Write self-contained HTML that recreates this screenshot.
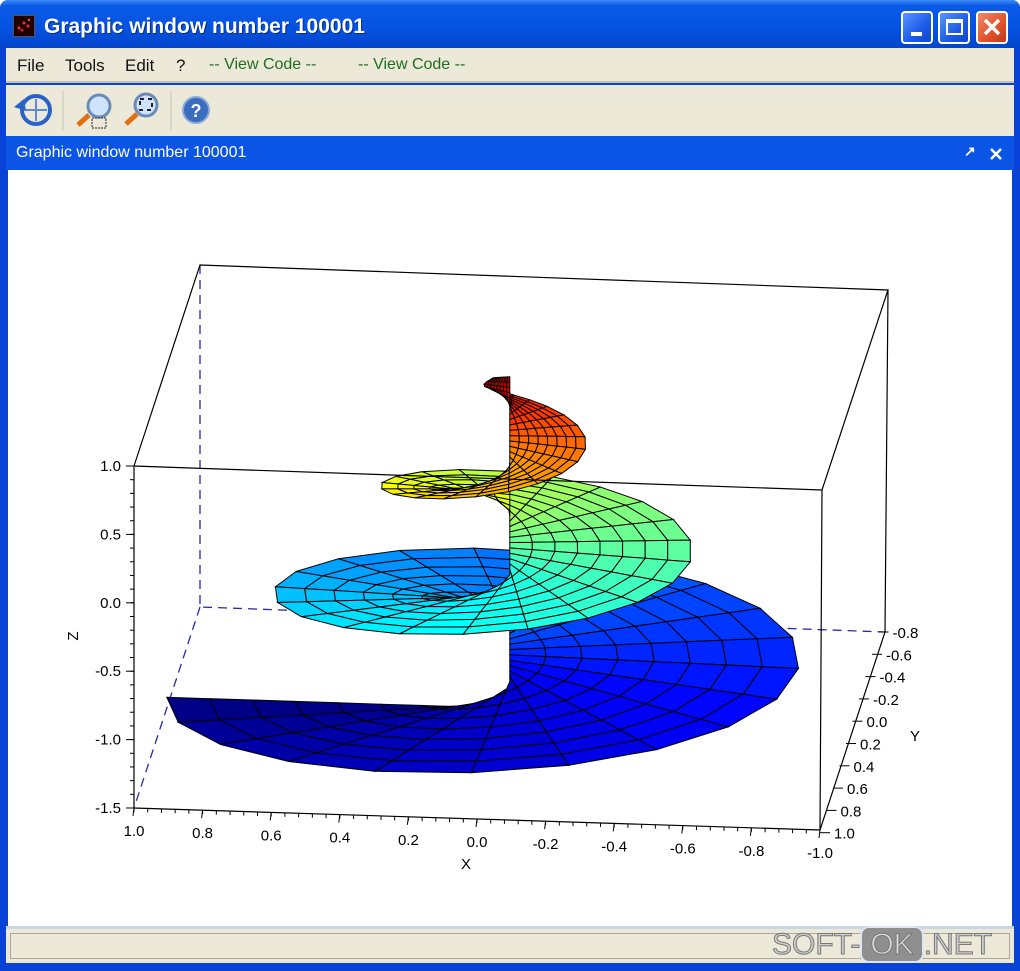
<!DOCTYPE html>
<html><head><meta charset="utf-8"><style>
*{margin:0;padding:0;box-sizing:border-box}
body{width:1020px;height:971px;overflow:hidden;background:#fff;font-family:"Liberation Sans",sans-serif;position:relative}
.abs{position:absolute}
#win{position:absolute;left:0;top:0;width:1020px;height:971px;background:#0842d6;border-radius:8px 8px 0 0}
#title{left:0;top:0;width:1020px;height:48px;border-radius:8px 8px 0 0;background:linear-gradient(#3d8cf7 0,#0a5ae8 12%,#0552e0 60%,#0445cc 100%)}
#title .t{left:44px;top:15px;color:#fff;font-weight:bold;font-size:21px;text-shadow:1px 1px 0 #0a2a8a}
.btn{top:11px;width:32px;height:33px;border:2px solid #fff;border-radius:4px;background:linear-gradient(135deg,#5a93ff,#1c5be8 60%,#1245c8)}
#menu{left:6px;top:48px;width:1008px;height:35px;background:#ece9d8;border-bottom:2px solid #c5c2b2;font-size:17px;color:#111}
#menu span{position:absolute;top:8px}
#tool{left:6px;top:85px;width:1008px;height:51px;background:#ece9d8}
#hdr{left:6px;top:136px;width:1008px;height:34px;background:#0a55e6;color:#fff;font-size:16px}
#plot{left:8px;top:170px;width:1004px;height:756px;background:#fff}
#status{left:6px;top:926px;width:1008px;height:37px;background:#ece9d8;border-top:3px solid #c8d4e8}
#status .in{position:absolute;left:4px;top:4px;right:4px;bottom:4px;border:1px solid #aca899}
</style></head><body>
<div id="win"></div>
<div id="title" class="abs">
 <div class="abs" style="left:13px;top:15px;width:22px;height:22px;background:#200;border:1px solid #555">
  <svg width="20" height="20"><circle cx="5" cy="12" r="1.5" fill="#e33"/><circle cx="10" cy="7" r="1.5" fill="#e33"/><circle cx="14" cy="10" r="1.5" fill="#e33"/><circle cx="8" cy="14" r="1.5" fill="#c22"/><circle cx="15" cy="4" r="1.2" fill="#e55"/></svg></div>
 <div class="t abs">Graphic window number 100001</div>
 <div class="btn abs" style="left:901px"><div class="abs" style="left:8px;bottom:6px;width:11px;height:4px;background:#fff"></div></div>
 <div class="btn abs" style="left:938px"><div class="abs" style="left:6px;top:6px;width:17px;height:16px;border:2px solid #fff;border-top-width:4px"></div></div>
 <div class="btn abs" style="left:976px;background:linear-gradient(135deg,#f08a6a,#e0502a 60%,#c03a18)"><svg width="28" height="29"><path d="M7 7L21 21M21 7L7 21" stroke="#fff" stroke-width="3.5"/></svg></div>
</div>
<div id="menu" class="abs">
 <span style="left:11px">File</span><span style="left:59px">Tools</span><span style="left:119px">Edit</span><span style="left:170px">?</span>
 <span style="left:203px;color:#1f6e1f;font-size:16px">-- View Code --</span><span style="left:352px;color:#1f6e1f;font-size:16px">-- View Code --</span>
</div>
<div id="tool" class="abs">
 <svg width="240" height="51">
  <circle cx="30" cy="25" r="14" fill="none" stroke="#2a62c8" stroke-width="4"/>
  <path d="M30 14V36M19 25H41" stroke="#5a8ad8" stroke-width="2"/>
  <path d="M8 22l10-8 2 12z" fill="#2a62c8"/>
  <line x1="57" y1="6" x2="57" y2="46" stroke="#c5c2b2"/>
  <circle cx="93" cy="21" r="11" fill="#cfe3ff" stroke="#6a8ab8" stroke-width="3"/>
  <path d="M83 30L72 40" stroke="#e07010" stroke-width="5"/>
  <rect x="86" y="33" width="14" height="10" fill="none" stroke="#222" stroke-dasharray="2 1"/>
  <circle cx="140" cy="20" r="11" fill="#cfe3ff" stroke="#6a8ab8" stroke-width="3"/>
  <rect x="134" y="14" width="12" height="11" fill="none" stroke="#222" stroke-width="2" stroke-dasharray="4 4"/>
  <path d="M131 29L120 39" stroke="#e07010" stroke-width="5"/>
  <line x1="165" y1="6" x2="165" y2="46" stroke="#c5c2b2"/>
  <circle cx="190" cy="25" r="13" fill="#3a6cc0" stroke="#8aa8d8" stroke-width="2"/>
  <text x="190" y="32" text-anchor="middle" fill="#fff" font-weight="bold" font-size="18" font-family="Liberation Sans">?</text>
 </svg>
</div>
<div id="hdr" class="abs"><span class="abs" style="left:10px;top:8px">Graphic window number 100001</span>
 <span class="abs" style="left:958px;top:7px;font-size:14px;font-weight:bold">&#8599;</span>
 <svg class="abs" style="left:983px;top:11px" width="14" height="14"><path d="M2 2L12 12M12 2L2 12" stroke="#fff" stroke-width="2.5"/></svg>
</div>
<div id="plot" class="abs"></div>
<svg id="sv" class="abs" style="left:0;top:0" width="1020" height="971" font-family="Liberation Sans" font-size="15"></svg>
<div id="status" class="abs"><div class="in"></div>
 <div class="abs" style="left:766px;top:-1px;font-size:30px;color:#cfcfcf;-webkit-text-stroke:1px #777;white-space:nowrap">
  <span>SOFT-</span><span style="background:#8f8f8f;color:#ddd;border-radius:9px;padding:0 8px;border:2px solid #dfe6f5">OK</span><span>.NET</span></div>
</div>
<script>
var sv=document.getElementById('sv'),h='';
function P(x,y,z){return [509.75-343*x-32.5*y,513.75-11*x+99*y-137*z];}
function jet(v){v=Math.max(0,Math.min(1,v));function f(a){return Math.round(255*Math.max(0,Math.min(1,1.5-Math.abs(4*v-a))));}return 'rgb('+f(3)+','+f(2)+','+f(1)+')';}
var T=3.05*2*Math.PI,nT=62,nR=8,polys=[];
function pt(t,r){var u=t/T,R=1-0.95*u;return [r*R*Math.cos(t),r*R*Math.sin(t),-1.42+2.42*u];}
for(var i=0;i<nT;i++){for(var j=0;j<nR;j++){
 var t0=T*i/nT,t1=T*(i+1)/nT,r0=j/nR,r1=(j+1)/nR;
 var q=[pt(t0,r0),pt(t1,r0),pt(t1,r1),pt(t0,r1)];
 var cx=0,cy=0,cz=0;q.forEach(function(a){cx+=a[0];cy+=a[1];cz+=a[2];});
 cx/=4;cy/=4;cz/=4;
 polys.push({q:q,d:cy+0.45*cz-0.1*cx,c:jet((cz+1.42)/2.42*0.95)});
}}
polys.sort(function(a,b){return a.d-b.d;});
var g='';
polys.forEach(function(p){g+='<polygon points="'+p.q.map(function(a){var s=P(a[0],a[1],a[2]);return s[0].toFixed(1)+','+s[1].toFixed(1);}).join(' ')+'" fill="'+p.c+'" stroke="#000" stroke-width="1"/>';});
h+='<g stroke="#2a2aa8" stroke-width="1.3" stroke-dasharray="9 6" fill="none"><path d="M200 265V607L885 632M200 607L134 808"/></g>';
h+=g;
h+='<g stroke="#000" stroke-width="1.2" fill="none"><path d="M200 265L888 290L822 490L134 466Z M134 466V808L820 830L885 632L888 290 M822 490L820 830"/></g>';
var zl=['1.0','0.5','0.0','-0.5','-1.0','-1.5'];
for(var k=0;k<6;k++){var y=466+k*68.4;h+='<text x="121" y="'+(y+5)+'" text-anchor="end">'+zl[k]+'</text><line x1="126" y1="'+y+'" x2="134" y2="'+y+'" stroke="#000"/>';}
for(var k=0;k<26;k++){var y=466+k*13.68;h+='<line x1="130" y1="'+y+'" x2="134" y2="'+y+'" stroke="#000"/>';}
h+='<text transform="translate(78,636) rotate(-90)" text-anchor="middle">Z</text>';
var xl=['1.0','0.8','0.6','0.4','0.2','0.0','-0.2','-0.4','-0.6','-0.8','-1.0'];
for(var k=0;k<11;k++){var x=134+k*68.6,y=808+k*2.2;h+='<text x="'+x+'" y="'+(y+28)+'" text-anchor="middle">'+xl[k]+'</text><line x1="'+x+'" y1="'+y+'" x2="'+(x-1)+'" y2="'+(y+8)+'" stroke="#000"/>';}
for(var k=0;k<50;k++){var x=134+k*13.72,y=808+k*0.44;h+='<line x1="'+x+'" y1="'+y+'" x2="'+x+'" y2="'+(y+4)+'" stroke="#000"/>';}
h+='<text x="466" y="869" text-anchor="middle">X</text>';
var yl=['-0.8','-0.6','-0.4','-0.2','0.0','0.2','0.4','0.6','0.8','1.0'];
for(var k=0;k<10;k++){var x=885-6.5-k*6.5,y=632+22.3*k;h+='<text x="'+(x+14)+'" y="'+(y+6)+'">'+yl[k]+'</text><line x1="'+x+'" y1="'+y+'" x2="'+(x+10)+'" y2="'+y+'" stroke="#000"/>';}
h+='<text x="910" y="741">Y</text>';
sv.innerHTML=h;
</script>
</body></html>
